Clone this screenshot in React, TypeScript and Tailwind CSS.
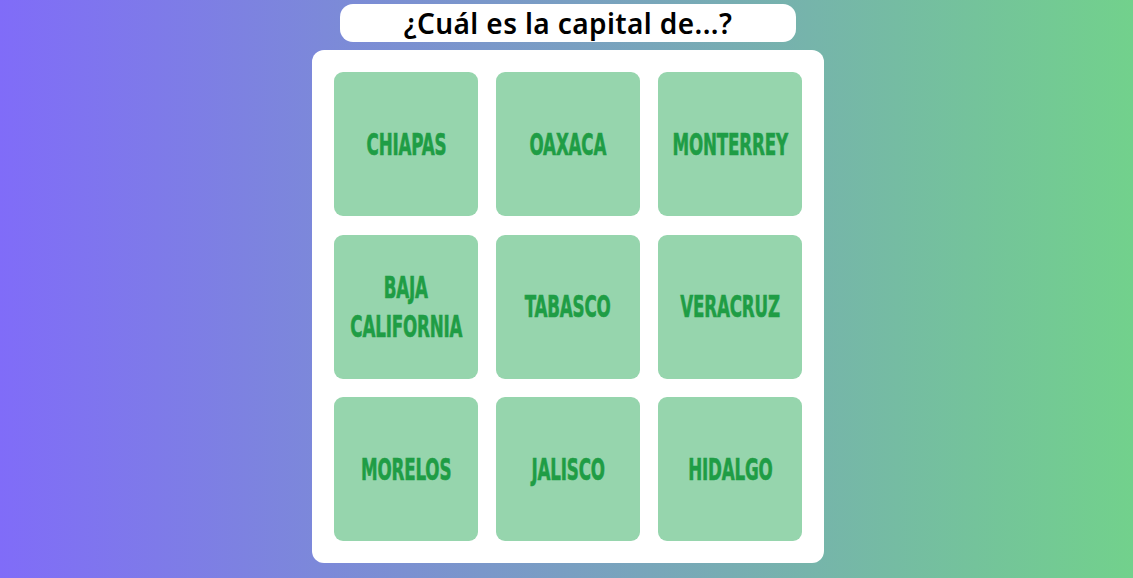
import React from "react";

const items = [
  ["CHIAPAS"],
  ["OAXACA"],
  ["MONTERREY"],
  ["BAJA", "CALIFORNIA"],
  ["TABASCO"],
  ["VERACRUZ"],
  ["MORELOS"],
  ["JALISCO"],
  ["HIDALGO"],
];

export default function App() {
  return (
    <div className="w-[1133px] h-[578px] overflow-hidden bg-[linear-gradient(to_right,#806cf8,#72d18c)] flex flex-col items-center">
      <div className="ml-[3px] mt-[4px] w-[456px] h-[38px] bg-white rounded-[13px] flex items-center justify-center">
        <span className="text-[28px] font-semibold text-black tracking-[0.4px] leading-none" style={{ fontFamily: '"Noto Sans", "Open Sans", sans-serif' }}>
          ¿Cuál es la capital de...?
        </span>
      </div>
      <div className="ml-[3px] mt-[8px] w-[512px] bg-white rounded-[12px] p-[22px] grid grid-cols-3 gap-x-[18px] gap-y-[18.5px]">
        {items.map((lines, i) => (
          <div key={i} className="h-[144px] bg-[#96d5ad] rounded-[9px] flex flex-col items-center justify-center">
            {lines.map((l) => (
              <span
                key={l}
                className="block text-[31px] font-bold text-[#1f9d45] leading-[39px] [transform:scaleX(0.6)] tracking-[-0.3px] whitespace-nowrap [-webkit-text-stroke:0.6px_#1f9d45]"
                style={{ fontFamily: '"DejaVu Sans Condensed", "DejaVu Sans", sans-serif' }}
              >
                {l}
              </span>
            ))}
          </div>
        ))}
      </div>
    </div>
  );
}
